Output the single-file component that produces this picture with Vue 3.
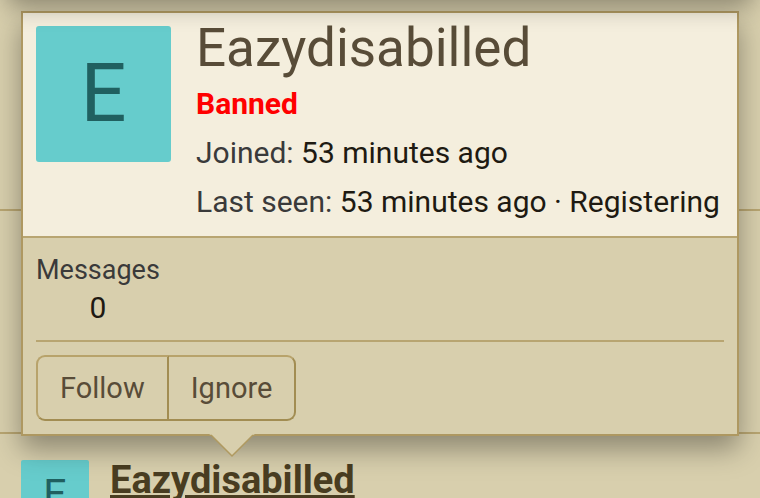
<template>
<div class="page">
  <div class="above-card"></div>
  <div class="member-row first"></div>
  <div class="member-row second"></div>
  <div class="member-row">
    <div class="avatar small">{{ member.name[0] }}</div>
    <a href="#" class="member-link">{{ member.name }}</a>
  </div>

  <div class="tooltip">
    <div class="tooltip-header">
      <div class="avatar">{{ member.name[0] }}</div>
      <div class="info">
        <h4 class="name">{{ member.name }}</h4>
        <div class="banned">Banned</div>
        <dl v-for="item in details" :key="item.label" class="pair">
          <dt>{{ item.label }}:</dt>&nbsp;<dd>{{ item.value }}</dd>
        </dl>
      </div>
    </div>
    <div class="tooltip-body">
      <dl class="stat">
        <dt>Messages</dt>
        <dd>{{ member.messages }}</dd>
      </dl>
      <hr class="separator">
      <div class="button-group">
        <button type="button">Follow</button>
        <button type="button">Ignore</button>
      </div>
    </div>
    <svg class="arrow" width="46" height="24" viewBox="0 0 46 24">
      <path d="M0 0H46L44 1L23 22L2 1Z" fill="#d8cfad"/>
      <path d="M2 1L23 22L44 1" fill="none" stroke="#b09a60" stroke-width="1.5"/>
    </svg>
  </div>
</div>
</template>
<script setup>
const member = {
    name : "Eazydisabilled",
    messages : 0
}

const details = [
    { label : "Joined", value : "53 minutes ago" },
    { label : "Last seen", value : "53 minutes ago · Registering" }
]
</script>

<style>
body {
  margin: 0;
  background: #d8cfad;
}
</style>
<style scoped>
.page {
  position: relative;
  height: 100vh;
  overflow: hidden;
  background: #d8cfad;
  color: #1e1a12;
  font-family: Roboto, sans-serif;
  font-size: 30px;
}

/* bottom shadow of the card that is scrolled out above */
.above-card {
  position: absolute;
  z-index: 3;
  top: -49px;
  left: 8px;
  right: 8px;
  height: 40px;
  box-shadow: 0 13px 26px rgba(0, 0, 0, 0.4);
}

.member-row {
  display: flex;
  gap: 21px;
  padding: 26px 21px;
  border-bottom: 2px solid #b8a571;
}

.member-row.first {
  min-height: 157px;
}

.member-row.second {
  min-height: 169px;
}

.member-link {
  color: #493d21;
  font-size: 38px;
  font-weight: 700;
  line-height: 40px;
  text-decoration: underline;
  text-decoration-thickness: 3px;
}

.avatar {
  flex: none;
  width: 135px;
  height: 136px;
  border-radius: 3px;
  background: #66cccc;
  color: #206060;
  font-size: 81px;
  line-height: 136px;
  text-align: center;
}

.avatar.small {
  width: 68px;
  height: 68px;
  border-radius: 2px;
  font-size: 41px;
  line-height: 68px;
}

.tooltip {
  position: absolute;
  z-index: 2;
  top: 11px;
  left: 21px;
  right: 21px;
  border: 2px solid #ae9861;
  background: #d8cfad;
  box-shadow: 0 13px 26px rgba(0, 0, 0, 0.35);
}

.tooltip-header {
  display: flex;
  gap: 25px;
  padding: 13px;
  border-bottom: 2px solid #b8a571;
  background: #f4eedd;
}

.info {
  display: flex;
  flex-direction: column;
  gap: 7px;
  line-height: 42px;
  white-space: nowrap;
}

.name {
  margin: 0 0 6px;
  color: #584c38;
  font-size: 53px;
  font-weight: 400;
  line-height: 44px;
}

.banned {
  color: #ff0000;
  font-weight: 700;
}

.pair {
  display: flex;
  margin: 0;
}

dt {
  color: #3a3a3a;
}

dd {
  margin: 0;
}

.tooltip-body {
  padding: 13px;
}

.stat {
  display: inline-block;
  margin: 0;
  line-height: 38px;
  text-align: center;
  vertical-align: top;
}

.stat dt {
  font-size: 27px;
}

.separator {
  margin: 13px 0;
  border: 0;
  border-top: 2px solid #b8a571;
}

.button-group {
  display: flex;
}

.button-group button {
  padding: 10px 22px;
  border: 2px solid;
  border-color: #b8a36b #a28d52 #a28d52 #b8a36b;
  background: transparent;
  color: #584c38;
  font-family: inherit;
  font-size: 29px;
  line-height: 42px;
}

.button-group button:first-child {
  border-radius: 9px 0 0 9px;
}

.button-group button:last-child {
  border-left: 0;
  border-radius: 0 9px 9px 0;
}

.arrow {
  position: absolute;
  top: 100%;
  left: 186px;
}
</style>
